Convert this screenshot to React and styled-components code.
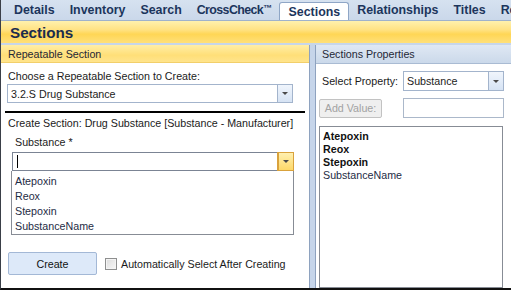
import { Fragment } from 'react';
import styled, { createGlobalStyle } from 'styled-components';

const GlobalStyle = createGlobalStyle`
  body {
    margin: 0;
    font-family: "Liberation Sans", Arial, sans-serif;
    font-size: 10.7px;
    color: #1b1b1b;
  }
  * { box-sizing: border-box; }
`;

const Frame = styled.div`
  width: 511px;
  height: 290px;
  overflow: hidden;
  display: flex;
  flex-direction: column;
  border-left: 1px solid #3a3f48;
  border-bottom: 2px solid #111;
  background: #fff;
`;

const TabBar = styled.div`
  height: 20px;
  flex: none;
  display: flex;
  align-items: flex-end;
  padding-left: 5px;
  background: linear-gradient(#d6e2f0, #cad8ea);
  white-space: nowrap;
  overflow: hidden;
`;

const Tab = styled.div`
  height: ${p => (p.$active ? '18px' : '20px')};
  display: flex;
  align-items: center;
  padding: 0 ${p => (p.$active ? '8px' : '7px')} 0 ${p => (p.$active ? '9px' : '8px')};
  font-weight: bold;
  font-size: 12.4px;
  letter-spacing: ${p => (p.$tight ? '-0.6px' : '0')};
  color: #1c355c;
  background: ${p => (p.$active ? '#fff' : 'transparent')};
  border: ${p => (p.$active ? '1px solid #8fa6c6' : 'none')};
  border-bottom: none;
  border-radius: 3px 3px 0 0;
`;

const Tm = styled.span`
  font-size: 9px;
  letter-spacing: -0.5px;
  position: relative;
  top: -2px;
`;

const TabSep = styled.div`
  width: 1px;
  height: 14px;
  align-self: center;
  background: #b4c4d9;
  margin-top: 2px;
`;

const TitleBand = styled.div`
  height: 23px;
  flex: none;
  display: flex;
  align-items: center;
  padding-left: 9px;
  font-weight: bold;
  font-size: 15.2px;
  color: #1a2c4e;
  border-top: 1px solid #9fb2cc;
  background: linear-gradient(#fff1ad 0%, #ffe283 40%, #ffd655 60%, #ffe07a 100%);
`;

const Strip = styled.div`
  height: 2px;
  flex: none;
  background: #c7d6ea;
`;

const Panes = styled.div`
  flex: 1;
  display: flex;
  min-height: 0;
`;

const LeftPane = styled.div`
  width: 308px;
  flex: none;
  display: flex;
  flex-direction: column;
`;

const RightPane = styled.div`
  flex: 1;
  display: flex;
  flex-direction: column;
  border-left: 1px solid #8ea2bf;
`;

const Splitter = styled.div`
  width: 6px;
  flex: none;
  background: #c6d5ea;
  border-left: 1px solid #8ea2bf;
`;

const PaneHeader = styled.div`
  height: ${p => (p.$blue ? '19px' : '18px')};
  flex: none;
  display: flex;
  align-items: center;
  padding-left: ${p => (p.$blue ? '6px' : '7px')};
  color: #1f2836;
  background: ${p =>
    p.$blue
      ? 'linear-gradient(#dfe8f4, #cbd9ea)'
      : 'linear-gradient(#ffeea6, #ffdf78 60%, #ffe48c)'};
  border-bottom: 1px solid ${p => (p.$blue ? '#a9bbd3' : '#f2cf6a')};
`;

const LeftBody = styled.div`
  flex: 1;
  display: flex;
  flex-direction: column;
  padding-top: 6px;
`;

const Label = styled.div`
  line-height: 14px;
  margin: ${p => p.$m || '0'};
  white-space: nowrap;
`;

const Combo = styled.div`
  display: flex;
  width: ${p => p.$w}px;
  height: ${p => p.$h || 19}px;
  margin: ${p => p.$m || '0'};
  border: 1px solid ${p => (p.$focus ? '#7b8494' : '#a3b4cc')};
  background: #fff;
`;

const ComboText = styled.div`
  flex: 1;
  display: flex;
  align-items: center;
  padding-left: 3px;
  white-space: nowrap;
`;

const Caret = styled.div`
  width: 1px;
  height: 13px;
  background: #000;
  margin-left: 1px;
`;

const DropBtn = styled.div`
  width: 15px;
  flex: none;
  display: flex;
  align-items: center;
  justify-content: center;
  border-left: 1px solid ${p => (p.$focus ? '#d9a23c' : '#a3b4cc')};
  background: ${p =>
    p.$focus
      ? 'linear-gradient(#fff0b0, #fdd869)'
      : 'linear-gradient(#f0f5fc, #d6e3f4)'};
  outline: ${p => (p.$focus ? '1px solid #d9a23c' : 'none')};
  &::after {
    content: '';
    border-left: 3px solid transparent;
    border-right: 3px solid transparent;
    border-top: 3px solid #4a4a4a;
  }
`;

const Rule = styled.div`
  height: 2px;
  background: #000;
  margin: 8px 4px 0 4px;
`;

const ListBox = styled.div`
  width: ${p => p.$w}px;
  height: ${p => p.$h};
  margin: ${p => p.$m || '0'};
  border: 1px solid #878c95;
  border-top: ${p => (p.$noTop ? 'none' : '1px solid #878c95')};
  padding: 3px 0 0 3px;
  background: #fff;
  flex: ${p => (p.$grow ? 1 : 'none')};
`;

const Item = styled.div`
  line-height: ${p => p.$lh}px;
  font-weight: ${p => (p.$bold ? 'bold' : 'normal')};
  color: ${p => (p.$bold ? '#111' : '#1e2c45')};
  white-space: nowrap;
`;

const ActionRow = styled.div`
  display: flex;
  align-items: center;
  margin: 17px 0 0 7px;
`;

const Button = styled.div`
  width: ${p => p.$w}px;
  height: ${p => p.$h}px;
  display: flex;
  align-items: center;
  justify-content: center;
  border-radius: 2px;
  border: 1px solid ${p => (p.$disabled ? '#c2c2c2' : '#a3b8d6')};
  background: ${p => (p.$disabled ? '#efefef' : '#dde9f9')};
  color: ${p => (p.$disabled ? '#a2a2a2' : '#111')};
  white-space: nowrap;
`;

const CheckBox = styled.div`
  width: 12px;
  height: 12px;
  margin: 1px 4px 0 8px;
  border: 1px solid #8e8f8f;
  background: linear-gradient(135deg, #dcdcdc, #f8f8f8);
  box-shadow: inset 0 0 0 1px #f4f4f4;
`;

const RightBody = styled.div`
  flex: 1;
  display: flex;
  flex-direction: column;
  padding: 7px 0 0 3px;
  min-height: 0;
`;

const PropGrid = styled.div`
  display: grid;
  grid-template-columns: 84px 101px;
  grid-auto-rows: 20px;
  row-gap: 7px;
  align-items: center;
`;

const PropLabel = styled.div`
  padding-left: 3px;
  white-space: nowrap;
`;

const TextInput = styled.div`
  height: 20px;
  border: 1px solid #abb8ca;
  background: #fff;
`;

const tabs = ['Details', 'Inventory', 'Search', 'CrossCheck', 'Sections', 'Relationships', 'Titles', 'Resources'];
const substances = ['Atepoxin', 'Reox', 'Stepoxin', 'SubstanceName'];

export default function App() {
  const activeIdx = tabs.indexOf('Sections');
  return (
    <Frame>
      <GlobalStyle />
      <TabBar>
        {tabs.map((t, i) => (
          <Fragment key={t}>
            {i > 0 && i !== activeIdx && i - 1 !== activeIdx && <TabSep />}
            <Tab $active={i === activeIdx} $tight={t === 'CrossCheck'}>
              {t}
              {t === 'CrossCheck' && <Tm>™</Tm>}
            </Tab>
          </Fragment>
        ))}
      </TabBar>
      <TitleBand>Sections</TitleBand>
      <Strip />
      <Panes>
        <LeftPane>
          <PaneHeader>Repeatable Section</PaneHeader>
          <LeftBody>
            <Label $m="0 0 0 7px">Choose a Repeatable Section to Create:</Label>
            <Combo $w={286} $m="1px 0 0 6px">
              <ComboText>3.2.S Drug Substance</ComboText>
              <DropBtn />
            </Combo>
            <Rule />
            <Label $m="3px 0 0 7px">Create Section: Drug Substance [Substance - Manufacturer]</Label>
            <Label $m="5px 0 0 14px">Substance *</Label>
            <Combo $w={282} $m="3px 0 0 11px" $focus>
              <ComboText><Caret /></ComboText>
              <DropBtn $focus />
            </Combo>
            <ListBox $w={283} $h="64px" $m="0 0 0 10px" $noTop>
              {substances.map(s => (
                <Item key={s} $lh={15}>{s}</Item>
              ))}
            </ListBox>
            <ActionRow>
              <Button $w={89} $h={23}>Create</Button>
              <CheckBox />
              <Label>Automatically Select After Creating</Label>
            </ActionRow>
          </LeftBody>
        </LeftPane>
        <Splitter />
        <RightPane>
          <PaneHeader $blue>Sections Properties</PaneHeader>
          <RightBody>
            <PropGrid>
              <PropLabel>Select Property:</PropLabel>
              <Combo $w={101} $h={20}>
                <ComboText>Substance</ComboText>
                <DropBtn />
              </Combo>
              <Button $w={63} $h={19} $disabled>Add Value:</Button>
              <TextInput />
            </PropGrid>
            <ListBox $w={184} $h="auto" $m="8px 0 0 0" $grow>
              {substances.map((s, i) => (
                <Item key={s} $lh={13} $bold={i < 3}>{s}</Item>
              ))}
            </ListBox>
          </RightBody>
        </RightPane>
      </Panes>
    </Frame>
  );
}
